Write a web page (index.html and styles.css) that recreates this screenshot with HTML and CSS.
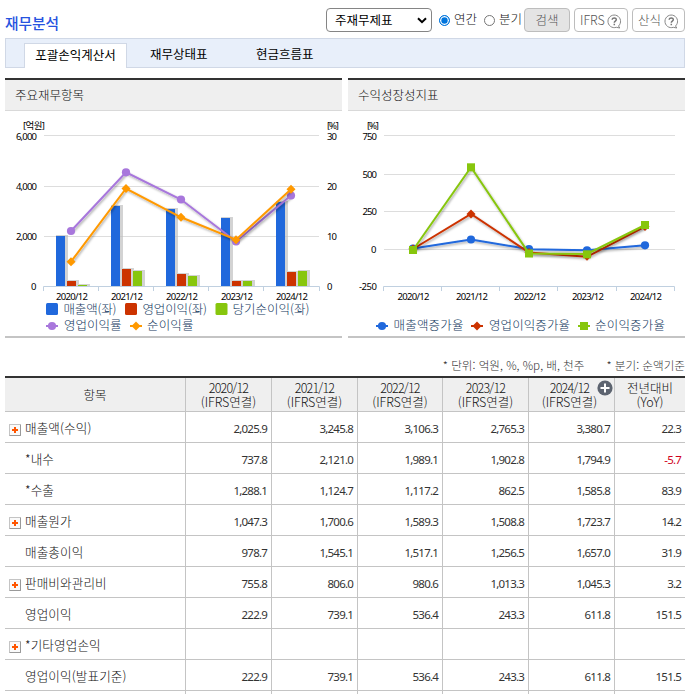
FILE: index.html
```html
<!DOCTYPE html>
<html lang="ko">
<head>
<meta charset="utf-8">
<title>재무분석</title>
<link rel="stylesheet" href="styles.css">
</head>
<body>
<header class="top">
  <h1>재무분석</h1>
  <div class="controls">
    <div class="select"><span>주재무제표</span><svg width="10" height="7" viewBox="0 0 10 7"><path d="M1 1.2 5 5.2 9 1.2" fill="none" stroke="#000" stroke-width="2"/></svg></div>
    <span class="radio on"></span><span class="rlabel first">연간</span>
    <span class="radio"></span><span class="rlabel">분기</span>
    <button class="btn search">검색</button>
    <button class="btn help ifrs"><span>IFRS</span><svg width="15" height="15" viewBox="0 0 15 15"><path d="M11.5 12A6.3 6.3 0 1 0 9.3 13.3L12.8 14Z" fill="none" stroke="#888"/><path d="M5.2 5.8C5.2 3.2 9.4 3.3 9.3 5.8C9.2 7.2 7.3 7.2 7.3 8.7M7.3 9.8V11.2" fill="none" stroke="#777" stroke-width="1.5"/></svg></button>
    <button class="btn help formula"><span>산식</span><svg width="15" height="15" viewBox="0 0 15 15"><path d="M11.5 12A6.3 6.3 0 1 0 9.3 13.3L12.8 14Z" fill="none" stroke="#888"/><path d="M5.2 5.8C5.2 3.2 9.4 3.3 9.3 5.8C9.2 7.2 7.3 7.2 7.3 8.7M7.3 9.8V11.2" fill="none" stroke="#777" stroke-width="1.5"/></svg></button>
  </div>
</header>
<nav class="tabs"><a class="tab active">포괄손익계산서</a><a class="tab second">재무상태표</a><a class="tab third">현금흐름표</a></nav>
<section class="panels">
  <article class="panel">
    <h2>주요재무항목</h2>
    <svg class="chart" width="337" height="225" viewBox="5 111 337 225">
      <defs><filter id="sh" filterUnits="userSpaceOnUse" x="0" y="100" width="692" height="240"><feDropShadow dx="1" dy="1.5" stdDeviation=".9" flood-color="#000" flood-opacity=".35"/></filter>
      <g id="dot"><circle r="4.1"/></g><path id="dia" d="M0-4.5 4.5 0 0 4.5-4.5 0Z"/><path id="sq" d="M-4-4H4V4H-4Z"/></defs>
      <path class="grid" d="M44 135.5H319M44 186.5H319M44 236.5H319"/>
      <path class="barshadow" d="M56 235h12v51h-12zM111 205h12v81h-12zM166 208h12v78h-12zM221 217h12v69h-12zM276 201h12v85h-12zM67 280h12v6h-12zM122 268h12v18h-12zM177 273h12v13h-12zM232 280h12v6h-12zM287 271h12v15h-12zM78 284h12v2h-12zM133 270h12v16h-12zM188 275h12v11h-12zM243 280h12v6h-12zM298 270h12v16h-12z"/>
      <path class="blue" d="M56 236h9v50h-9zM111 206h9v80h-9zM166 209h9v77h-9zM221 218h9v68h-9zM276 202h9v84h-9z"/>
      <path class="red" d="M67 281h9v5h-9zM122 269h9v17h-9zM177 274h9v12h-9zM232 281h9v5h-9zM287 272h9v14h-9z"/>
      <path class="green" d="M78 285h9v1h-9zM133 271h9v15h-9zM188 276h9v10h-9zM243 281h9v5h-9zM298 271h9v15h-9z"/>
      <path class="axis" d="M43.5 291V286.5H319.5V291M98.5 286V291M153.5 286V291M208.5 286V291M263.5 286V291"/>
      <path class="line lpurple" filter="url(#sh)" d="M71 231 126 172.3 181 199.5 236 241.5 291 195.5"/>
      <g class="purple"><use href="#dot" x="71" y="231"/><use href="#dot" x="126" y="172.3"/><use href="#dot" x="181" y="199.5"/><use href="#dot" x="236" y="241.5"/><use href="#dot" x="291" y="195.5"/></g>
      <path class="line lorange" filter="url(#sh)" d="M71 261.7 126 188.5 181 217.3 236 239.7 291 189.3"/>
      <g class="orange"><use href="#dia" x="71" y="261.7"/><use href="#dia" x="126" y="188.5"/><use href="#dia" x="181" y="217.3"/><use href="#dia" x="236" y="239.7"/><use href="#dia" x="291" y="189.3"/></g>
      <g class="num"><text x="23" y="129" textLength="22">[억원]</text><text x="327" y="129" textLength="12">[%]</text>
      <text x="16" y="140" textLength="21">6,000</text><text x="16" y="190" textLength="21">4,000</text><text x="16" y="240" textLength="21">2,000</text><text x="31" y="290" textLength="5.5">0</text>
      <text x="327" y="140" textLength="10">30</text><text x="327" y="190" textLength="10">20</text><text x="327" y="240" textLength="10">10</text><text x="327" y="290" textLength="5.5">0</text>
      <text x="56" y="300" textLength="32">2020/12</text><text x="111" y="300" textLength="32">2021/12</text><text x="166" y="300" textLength="32">2022/12</text><text x="221" y="300" textLength="32">2023/12</text><text x="276" y="300" textLength="32">2024/12</text></g>
      <rect class="blue" x="46" y="303" width="12" height="12" rx="1.5"/><rect class="red" x="125" y="303" width="12" height="12" rx="1.5"/><rect class="green" x="215.5" y="303" width="12" height="12" rx="1.5"/>
      <path class="line lpurple" d="M46 326H58"/><use class="purple" href="#dot" x="52" y="326"/><path class="line lorange" d="M130 326H142"/><use class="orange" href="#dia" x="136" y="326"/>
      <g class="legend"><text x="63.5" y="314" textLength="53">매출액(좌)</text><text x="142.5" y="314" textLength="64.5">영업이익(좌)</text><text x="232.5" y="314" textLength="77">당기순이익(좌)</text><text x="64" y="330" textLength="57.5">영업이익률</text><text x="147" y="330" textLength="46.5">순이익률</text></g>
    </svg>
  </article>
  <article class="panel">
    <h2>수익성장성지표</h2>
    <svg class="chart" width="337" height="225" viewBox="348 111 337 225">
      <path class="grid" d="M384 135.5H675M384 174.5H675M384 211.5H675M384 249.5H675"/>
      <path class="axis" d="M383.5 291V286.5H674.5V291M441.5 286V291M499.5 286V291M557.5 286V291M616.5 286V291"/>
      <path class="line lblue" filter="url(#sh)" d="M413 248.5 471 239.5 529 249.2 587 250.3 645 245.3"/>
      <g class="blue"><use href="#dot" x="413" y="248.5"/><use href="#dot" x="471" y="239.5"/><use href="#dot" x="529" y="249.2"/><use href="#dot" x="587" y="250.3"/><use href="#dot" x="645" y="245.3"/></g>
      <path class="line lred" filter="url(#sh)" d="M413 249 471 214 529 252.5 587 256.8 645 226.5"/>
      <g class="red"><use href="#dia" x="413" y="249"/><use href="#dia" x="471" y="214"/><use href="#dia" x="529" y="252.5"/><use href="#dia" x="587" y="256.2"/><use href="#dia" x="645" y="226.5"/></g>
      <path class="line lgreen" filter="url(#sh)" d="M413 250 471 167.3 529 253.5 587 254 645 225"/>
      <g class="green"><use href="#sq" x="413" y="250"/><use href="#sq" x="471" y="167.3"/><use href="#sq" x="529" y="253.5"/><use href="#sq" x="587" y="254.3"/><use href="#sq" x="645" y="225"/></g>
      <g class="num"><text x="367" y="129" textLength="12">[%]</text><text x="362.5" y="140" textLength="14.5">750</text><text x="362.5" y="178" textLength="14.5">500</text><text x="362.5" y="215" textLength="14.5">250</text><text x="371" y="253" textLength="5.5">0</text><text x="359" y="290" textLength="18">-250</text>
      <text x="397.5" y="300" textLength="32">2020/12</text><text x="456" y="300" textLength="32">2021/12</text><text x="514" y="300" textLength="32">2022/12</text><text x="572" y="300" textLength="32">2023/12</text><text x="630" y="300" textLength="32">2024/12</text></g>
      <path class="line lblue" d="M376 326H388"/><use class="blue" href="#dot" x="382" y="326"/><path class="line lred" d="M471 326H483"/><use class="red" href="#dia" x="477" y="326"/><path class="line lgreen" d="M578 326H590"/><use class="green" href="#sq" x="584" y="326"/>
      <g class="legend"><text x="393.5" y="330" textLength="70">매출액증가율</text><text x="489" y="330" textLength="81">영업이익증가율</text><text x="595" y="330" textLength="70">순이익증가율</text></g>
    </svg>
  </article>
</section>
<div class="notes"><span class="unit">* 단위: 억원, %, %p, 배, 천주</span><span class="quarter">* 분기: 순액기준</span></div>
<table>
  <colgroup><col class="c0"><col class="c1"><col class="c1"><col class="c2"><col class="c1"><col class="c1"><col class="c3"></colgroup>
  <thead><tr><th>항목</th><th><span class="date">2020/12</span><br>(IFRS연결)</th><th><span class="date">2021/12</span><br>(IFRS연결)</th><th><span class="date">2022/12</span><br>(IFRS연결)</th><th><span class="date">2023/12</span><br>(IFRS연결)</th><th class="latest"><span class="date">2024/12</span><br>(IFRS연결)<svg class="add" width="16" height="16" viewBox="0 0 16 16"><circle cx="8" cy="8" r="7.6" fill="#5d6470"/><path d="M8 3.5V12.5M3.5 8H12.5" stroke="#fff" stroke-width="2"/></svg></th><th>전년대비<br>(YoY)</th></tr></thead>
  <tbody>
    <tr><td><i class="plus"></i>매출액(수익)</td><td>2,025.9</td><td>3,245.8</td><td>3,106.3</td><td>2,765.3</td><td>3,380.7</td><td>22.3</td></tr>
    <tr><td>*내수</td><td>737.8</td><td>2,121.0</td><td>1,989.1</td><td>1,902.8</td><td>1,794.9</td><td class="neg">-5.7</td></tr>
    <tr><td>*수출</td><td>1,288.1</td><td>1,124.7</td><td>1,117.2</td><td>862.5</td><td>1,585.8</td><td>83.9</td></tr>
    <tr><td><i class="plus"></i>매출원가</td><td>1,047.3</td><td>1,700.6</td><td>1,589.3</td><td>1,508.8</td><td>1,723.7</td><td>14.2</td></tr>
    <tr><td>매출총이익</td><td>978.7</td><td>1,545.1</td><td>1,517.1</td><td>1,256.5</td><td>1,657.0</td><td>31.9</td></tr>
    <tr><td><i class="plus"></i>판매비와관리비</td><td>755.8</td><td>806.0</td><td>980.6</td><td>1,013.3</td><td>1,045.3</td><td>3.2</td></tr>
    <tr><td>영업이익</td><td>222.9</td><td>739.1</td><td>536.4</td><td>243.3</td><td>611.8</td><td>151.5</td></tr>
    <tr><td><i class="plus"></i>*기타영업손익</td><td></td><td></td><td></td><td></td><td></td><td></td></tr>
    <tr><td>영업이익(발표기준)</td><td>222.9</td><td>739.1</td><td>536.4</td><td>243.3</td><td>611.8</td><td>151.5</td></tr>
    <tr><td></td><td></td><td></td><td></td><td></td><td></td><td></td></tr>
  </tbody>
</table>
</body>
</html>
```
FILE: styles.css
```css
* { box-sizing: border-box; }
html { overflow: hidden; }
body { margin: 0; padding: 0 7px 0 5px; width: 692px; height: 694px; overflow: hidden; background: #fff; color: #111; font: 300 12.5px/14px "Noto Sans CJK KR", sans-serif; }
.top { display: flex; justify-content: space-between; height: 38px; padding-top: 8px; }
h1 { margin: 6px 0 0; font-size: 14.7px; line-height: 18px; font-weight: 500; color: #2653df; }
.controls { display: flex; height: 24px; align-items: center; white-space: nowrap; }
.select { display: flex; align-items: center; justify-content: space-between; width: 106px; height: 24px; padding: 0 4px 0 8px; border: 1px solid #858585; border-radius: 4px; color: #000; font-weight: 400; }
.radio { width: 11px; height: 11px; border: 1px solid #767676; border-radius: 50%; margin-left: 6px; }
.radio.on { margin-left: 7px; border: 1.5px solid #0075dd; background: #0075dd; box-shadow: inset 0 0 0 1.3px #fff; }
.rlabel { width: 22px; margin: -3px 0 0 4px; }
.rlabel.first { width: 24px; }
.btn { height: 24px; padding: 0; border: 1px solid #bdbdbd; border-radius: 4px; background: #fff; color: #555; font: inherit; line-height: 20px; }
.search { width: 46px; margin-left: 3px; background: #e4e4e4; }
.help { display: flex; align-items: center; justify-content: space-between; margin-left: 4px; padding: 0 5px; }
.help svg { margin-top: 2px; }
.ifrs { width: 54px; }
.formula { width: 53px; }
.tabs { display: flex; align-items: flex-end; height: 30px; padding-left: 18px; border: 1px solid #d0d8e6; background: #e8effa; color: #000; font-weight: 400; }
.tab { line-height: 22px; height: 24px; }
.tab.active { width: 103px; height: 25px; margin-bottom: -1px; border: 1px solid #d0d8e6; border-bottom: 0; background: #fff; text-align: center; }
.second { margin-left: 23px; width: 106px; }
.panels { display: grid; grid-template-columns: 337px 337px; gap: 6px; margin-top: 10px; }
.panel { height: 260px; border-top: 2px solid #333; border-bottom: 2px solid #c4c4c4; }
h2 { height: 31px; margin: 0; padding-left: 10px; border-bottom: 1px solid #d9d9d9; background: #efefef; font: inherit; line-height: 30px; }
.chart { display: block; }
.grid { fill: none; stroke: #ddd; }
.axis { fill: none; stroke: #c0d0e0; }
.barshadow { fill: #bbb; opacity: .65; }
.line { fill: none; stroke-width: 2; }
.blue { fill: #2068dc; }
.red { fill: #cc3300; }
.green { fill: #87c60d; }
.purple { fill: #a877dc; }
.orange { fill: #ff9900; }
.lblue { stroke: #2068dc; }
.lred { stroke: #cc3300; }
.lgreen { stroke: #87c60d; }
.lpurple { stroke: #a877dc; }
.lorange { stroke: #ff9900; }
.num { fill: #000; font: 400 9.5px "Noto Sans", "Noto Sans CJK KR", sans-serif; }
.legend { fill: #12385e; font: 300 12.5px "Noto Sans CJK KR", sans-serif; }
.num text, .legend text { white-space: pre; }
.notes { display: flex; justify-content: flex-end; height: 38px; padding-top: 20px; color: #333; font-size: 11.6px; white-space: nowrap; }
.unit { margin-right: 22px; }
table { width: 680px; table-layout: fixed; border-collapse: separate; border-spacing: 0; border-top: 2px solid #333; }
.c0 { width: 181px; }
.c1 { width: 86px; }
.c2 { width: 85px; }
.c3 { width: 70px; }
th, td { padding: 0; border-right: 1px solid #c4c4c4; border-bottom: 1px solid #c4c4c4; white-space: nowrap; }
th:last-child, td:last-child { border-right: 0; }
th { height: 34px; padding-top: 1px; background: #efefef; font-weight: 300; text-align: center; }
.date { letter-spacing: -.8px; }
.latest { position: relative; padding-right: 4px; }
.add { position: absolute; right: 1px; top: 2px; }
td { position: relative; height: 31px; padding: 4px 4px 0 0; text-align: right; color: #333; font: 400 11.5px/14px "Noto Sans", sans-serif; letter-spacing: -.8px; }
td:first-child { padding: 2px 0 0 20px; text-align: left; color: #111; font: 300 12.6px/14px "Noto Sans CJK KR", sans-serif; letter-spacing: .1px; }
td.neg { color: #d0021b; }
.plus { position: absolute; left: 4px; top: 12px; width: 12px; height: 12px; border: 1px solid #c4c4c4; border-right-color: #999; border-bottom-color: #999; border-radius: 1px; background: linear-gradient(#f50, #f50) center / 6px 2px no-repeat, linear-gradient(#f50, #f50) center / 2px 6px no-repeat, #fafafa; }
```
